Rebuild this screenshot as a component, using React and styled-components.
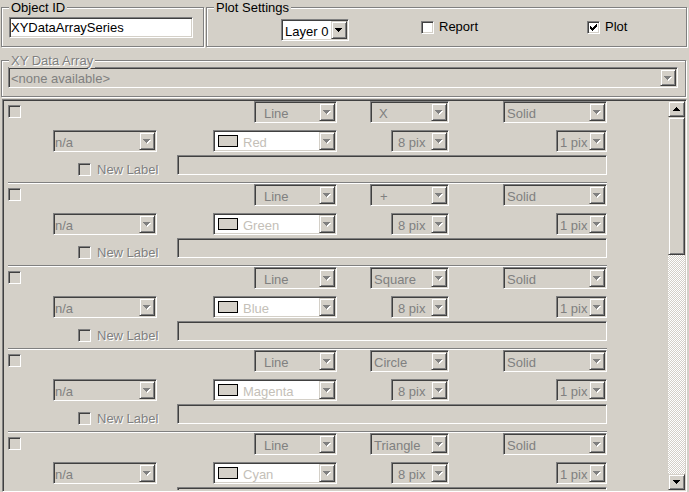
import React from "react";
import styled, { createGlobalStyle, css } from "styled-components";

const FACE = "#d4d0c8";
const SHADOW = "#808080";
const DARK = "#404040";
const LIGHT = "#ffffff";

const GlobalStyle = createGlobalStyle`
  html, body { margin: 0; padding: 0; background: ${FACE}; }
  body {
    font-family: "Liberation Sans", Arial, sans-serif;
    font-size: 13px;
    color: #000;
  }
`;

// classic 3d edges
const sunken = css`
  border: 1px solid;
  border-color: ${SHADOW} ${LIGHT} ${LIGHT} ${SHADOW};
  box-shadow: inset 1px 1px 0 ${DARK}, inset -1px -1px 0 ${FACE};
`;
const raised = css`
  border: 1px solid;
  border-color: ${FACE} ${DARK} ${DARK} ${FACE};
  box-shadow: inset 1px 1px 0 ${LIGHT}, inset -1px -1px 0 ${SHADOW};
`;

const ARROW = "M0 0h7v1h-1v1h-1v1h-1v1h-1v-1h-1v-1h-1v-1h-1z";
const CHECK =
  "M0 2h1v1h1v1h1v-1h1v-1h1v-1h1v-1h1v3h-1v1h-1v1h-1v1h-1v1h-1v-1h-1v-1h-1z";

function Arrow({ disabled, up }) {
  const flip = up ? "translate(0,4) scale(1,-1)" : undefined;
  return (
    <svg width="8" height="5" viewBox="0 0 8 5" shapeRendering="crispEdges">
      {disabled && (
        <g transform="translate(1,1)">
          <path d={ARROW} fill={LIGHT} transform={flip} />
        </g>
      )}
      <path d={ARROW} fill={disabled ? SHADOW : "#000"} transform={flip} />
    </svg>
  );
}

const Page = styled.div`
  width: 689px;
  height: 492px;
  overflow: hidden;
  background: ${FACE};
  display: flex;
  flex-direction: column;
  line-height: 1;
`;

const TopRow = styled.div`
  display: flex;
  gap: 2px;
  padding: 7px 0 0 1px;
`;

const Group = styled.div`
  position: relative;
  box-sizing: border-box;
  flex: none;
  width: ${(p) => p.$w}px;
  height: ${(p) => p.$h}px;
  margin: ${(p) => p.$m || 0};
  padding: ${(p) => p.$pad || 0};
  border: 1px solid ${SHADOW};
  box-shadow: inset 1px 1px 0 ${LIGHT}, 1px 1px 0 ${LIGHT};
  display: flex;
  align-items: flex-start;
`;

const Caption = styled.span`
  position: absolute;
  top: -8px;
  left: 7px;
  padding: 0 2px;
  background: ${FACE};
  line-height: 15px;
  white-space: nowrap;
  color: ${(p) => (p.$disabled ? SHADOW : "#000")};
  text-shadow: ${(p) => (p.$disabled ? `1px 1px 0 ${LIGHT}` : "none")};
`;

const TextBox = styled.div`
  box-sizing: border-box;
  flex: none;
  width: ${(p) => p.$w}px;
  height: ${(p) => p.$h || 21}px;
  margin-left: ${(p) => p.$ml || 0}px;
  ${sunken};
  background: ${(p) => (p.$white ? LIGHT : FACE)};
  padding: 2px 0 0 1px;
  line-height: 15px;
  white-space: nowrap;
  overflow: hidden;
`;

const Combo = styled.div`
  box-sizing: border-box;
  flex: none;
  width: ${(p) => p.$w}px;
  height: ${(p) => p.$h || 22}px;
  margin-left: ${(p) => p.$ml || 0}px;
  ${sunken};
  background: ${(p) => (p.$white ? LIGHT : FACE)};
  padding: 1px;
  display: flex;
  align-items: stretch;
`;

const Value = styled.div`
  flex: 1;
  min-width: 0;
  display: flex;
  align-items: center;
  gap: 5px;
  padding: 2px 0 0 ${(p) => p.$pad || 0}px;
  white-space: nowrap;
  overflow: hidden;
  color: ${(p) => p.$color};
`;

const DropButton = styled.div`
  box-sizing: border-box;
  flex: none;
  width: 16px;
  ${raised};
  background: ${FACE};
  display: flex;
  align-items: center;
  justify-content: center;
  padding-top: 1px;
`;

const Swatch = styled.span`
  box-sizing: border-box;
  flex: none;
  width: 20px;
  height: 12px;
  margin-top: -2px;
  border: 1px solid #000;
  background: ${FACE};
`;

function Select({ w, h, ml, white, disabled = true, pad = 2, textColor, children, swatch }) {
  const color = textColor || (disabled ? SHADOW : "#000");
  return (
    <Combo $w={w} $h={h} $ml={ml} $white={white}>
      <Value $pad={pad} $color={color}>
        {swatch && <Swatch />}
        {children}
      </Value>
      <DropButton>
        <Arrow disabled={disabled} />
      </DropButton>
    </Combo>
  );
}

const Box = styled.span`
  box-sizing: border-box;
  flex: none;
  width: 13px;
  height: 13px;
  margin: ${(p) => p.$m || 0};
  ${sunken};
  background: ${(p) => (p.$enabled ? LIGHT : FACE)};
  display: flex;
  align-items: center;
  justify-content: center;
`;

function CheckBox({ enabled, checked, m }) {
  return (
    <Box $enabled={enabled} $m={m}>
      {checked && (
        <svg width="7" height="7" viewBox="0 0 7 7" shapeRendering="crispEdges">
          <path d={CHECK} fill="#000" />
        </svg>
      )}
    </Box>
  );
}

const Label = styled.span`
  flex: none;
  width: ${(p) => (p.$w ? `${p.$w}px` : "auto")};
  margin: ${(p) => p.$m || 0};
  line-height: 15px;
  white-space: nowrap;
  color: ${(p) => (p.$disabled ? SHADOW : "#000")};
  text-shadow: ${(p) => (p.$disabled ? `1px 1px 0 ${LIGHT}` : "none")};
`;

const Panel = styled.div`
  box-sizing: border-box;
  width: 685px;
  height: 393px;
  margin: 2px 0 0 2px;
  ${sunken};
  padding: 1px;
  display: flex;
  flex: none;
`;

const Rows = styled.div`
  flex: 1;
  min-width: 0;
  overflow: hidden;
  display: flex;
  flex-direction: column;
`;

const SeriesRow = styled.div`
  flex: none;
  display: flex;
  flex-direction: column;
`;

const Line = styled.div`
  display: flex;
  align-items: flex-start;
  height: ${(p) => p.$h}px;
  margin-top: ${(p) => p.$mt || 0}px;
`;

const Separator = styled.div`
  width: 599px;
  margin: 7px 0 0 4px;
  border-top: 1px solid ${SHADOW};
  border-bottom: 1px solid ${LIGHT};
`;

const ScrollBar = styled.div`
  flex: none;
  width: 17px;
  display: flex;
  flex-direction: column;
`;

const ScrollButton = styled.div`
  box-sizing: border-box;
  height: 16px;
  flex: none;
  ${raised};
  background: ${FACE};
  display: flex;
  align-items: center;
  justify-content: center;
`;

const Thumb = styled.div`
  box-sizing: border-box;
  height: 138px;
  flex: none;
  ${raised};
  background: ${FACE};
`;

const Track = styled.div`
  flex: 1;
  background-color: ${FACE};
  background-image: conic-gradient(${LIGHT} 25%, ${FACE} 0 50%, ${LIGHT} 0 75%, ${FACE} 0);
  background-size: 2px 2px;
`;

const series = [
  { marker: "X", pad: 7, color: "Red" },
  { marker: "+", pad: 8, color: "Green" },
  { marker: "Square", pad: 2, color: "Blue" },
  { marker: "Circle", pad: 2, color: "Magenta" },
  { marker: "Triangle", pad: 2, color: "Cyan" },
];

function Series({ marker, pad, color }) {
  return (
    <SeriesRow>
      <Line $h={22}>
        <CheckBox m="4px 0 0 4px" />
        <Select w={83} ml={233} pad={8}>Line</Select>
        <Select w={79} ml={33} pad={pad}>{marker}</Select>
        <Select w={104} ml={54}>Solid</Select>
      </Line>
      <Line $h={22} $mt={7}>
        <Select w={104} ml={49} pad={0}>n/a</Select>
        <Select w={124} ml={56} white pad={3} textColor="#c4c0b8" swatch>
          {color}
        </Select>
        <Select w={58} ml={54} pad={5}>8 pix</Select>
        <Select w={51} ml={107}>1 pix</Select>
      </Line>
      <Line $h={20} $mt={3}>
        <CheckBox m="8px 0 0 74px" />
        <Label $w={80} $m="7px 0 0 6px" $disabled>
          New Label
        </Label>
        <TextBox $w={430} $h={20} />
      </Line>
      <Separator />
    </SeriesRow>
  );
}

export default function App() {
  return (
    <Page>
      <GlobalStyle />
      <TopRow>
        <Group $w={203} $h={40} $pad="9px 0 0 7px">
          <Caption>Object ID</Caption>
          <TextBox $w={184} $white>
            XYDataArraySeries
          </TextBox>
        </Group>
        <Group $w={481} $h={40} $pad="11px 0 0 74px">
          <Caption>Plot Settings</Caption>
          <Select w={68} disabled={false} white>
            Layer 0
          </Select>
          <CheckBox enabled m="2px 0 0 72px" />
          <Label $w={148} $m="0 0 0 5px">Report</Label>
          <CheckBox enabled checked m="2px 0 0 0" />
          <Label $m="0 0 0 5px">Plot</Label>
        </Group>
      </TopRow>
      <Group $w={685} $h={37} $m="13px 0 0 1px" $pad="6px 0 0 6px">
        <Caption $disabled>XY Data Array</Caption>
        <Select w={670} h={21} pad={1}>
          &lt;none available&gt;
        </Select>
      </Group>
      <Panel>
        <Rows>
          {series.map((s) => (
            <Series key={s.color} {...s} />
          ))}
        </Rows>
        <ScrollBar>
          <ScrollButton>
            <Arrow up />
          </ScrollButton>
          <Thumb />
          <Track />
          <ScrollButton>
            <Arrow />
          </ScrollButton>
        </ScrollBar>
      </Panel>
    </Page>
  );
}
